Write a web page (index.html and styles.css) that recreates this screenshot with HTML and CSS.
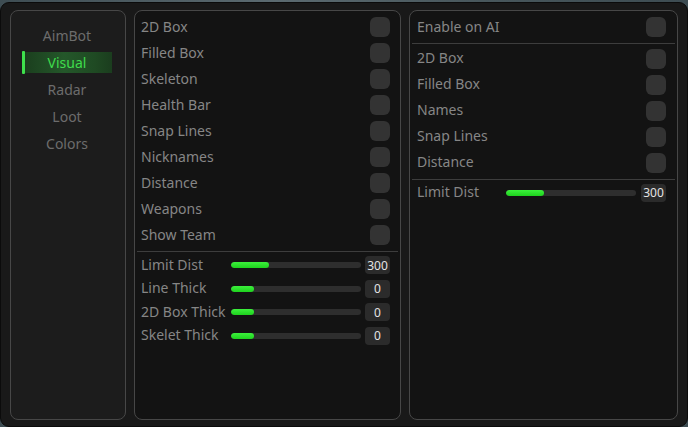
FILE: index.html
```html
<!DOCTYPE html>
<html>
<head>
<meta charset="utf-8">
<link rel="stylesheet" href="styles.css">
</head>
<body>
<div class="window">
  <nav class="panel sidebar">
    <div class="tab">AimBot</div>
    <div class="tab active">Visual</div>
    <div class="tab">Radar</div>
    <div class="tab">Loot</div>
    <div class="tab">Colors</div>
  </nav>

  <section class="panel main">
    <div class="row"><span class="lbl">2D Box</span><i class="check"></i></div>
    <div class="row"><span class="lbl">Filled Box</span><i class="check"></i></div>
    <div class="row"><span class="lbl">Skeleton</span><i class="check"></i></div>
    <div class="row"><span class="lbl">Health Bar</span><i class="check"></i></div>
    <div class="row"><span class="lbl">Snap Lines</span><i class="check"></i></div>
    <div class="row"><span class="lbl">Nicknames</span><i class="check"></i></div>
    <div class="row"><span class="lbl">Distance</span><i class="check"></i></div>
    <div class="row"><span class="lbl">Weapons</span><i class="check"></i></div>
    <div class="row"><span class="lbl">Show Team</span><i class="check"></i></div>
    <div class="sep"></div>
    <div class="srow"><span class="lbl slabel">Limit Dist</span><div class="track"><div class="fill" style="width:38px"></div></div><span class="val">300</span></div>
    <div class="srow"><span class="lbl slabel">Line Thick</span><div class="track"><div class="fill" style="width:23px"></div></div><span class="val">0</span></div>
    <div class="srow"><span class="lbl slabel">2D Box Thick</span><div class="track"><div class="fill" style="width:23px"></div></div><span class="val">0</span></div>
    <div class="srow"><span class="lbl slabel">Skelet Thick</span><div class="track"><div class="fill" style="width:23px"></div></div><span class="val">0</span></div>
  </section>

  <section class="panel side">
    <div class="row"><span class="lbl">Enable on AI</span><i class="check"></i></div>
    <div class="sep"></div>
    <div class="row"><span class="lbl">2D Box</span><i class="check"></i></div>
    <div class="row"><span class="lbl">Filled Box</span><i class="check"></i></div>
    <div class="row"><span class="lbl">Names</span><i class="check"></i></div>
    <div class="row"><span class="lbl">Snap Lines</span><i class="check"></i></div>
    <div class="row"><span class="lbl">Distance</span><i class="check"></i></div>
    <div class="sep"></div>
    <div class="srow"><span class="lbl slabel">Limit Dist</span><div class="track"><div class="fill" style="width:38px"></div></div><span class="val">300</span></div>
  </section>
</div>
</body>
</html>
```

FILE: styles.css
```css
* { box-sizing: border-box; }
html, body { margin: 0; padding: 0; }
body {
  width: 688px;
  height: 427px;
  overflow: hidden;
  background: linear-gradient(90deg, #3e4d53, #5b6a70 40%, #48575c 70%, #3d4c52);
  font-family: "Noto Sans", "Open Sans", sans-serif;
}
.window {
  margin-top: 2px;
  height: 425px;
  background: #191919;
  border: 1px solid #0b0b0b;
  border-radius: 9px;
  padding: 7px 9px 7px 9px;
  display: grid;
  grid-template-columns: 116px 267px 269px;
  column-gap: 8px;
}
.panel {
  border: 1px solid #474747;
  border-radius: 8px;
  height: 410px;
  display: flex;
  flex-direction: column;
}
.sidebar {
  background: #1c1c1c;
  padding: 11px 13px 0 11px;
}
.tab {
  height: 27px;
  display: flex;
  align-items: center;
  justify-content: center;
  font-size: 14px;
  color: #6c6c6c;
  position: relative;
}
.tab.active {
  color: #3fdc4c;
  isolation: isolate;
}
.tab.active::before {
  content: "";
  position: absolute;
  left: 3px; right: 0; top: 3px; bottom: 3px;
  background: linear-gradient(90deg, #1b3f1e, #24572a 45%, #1f4a23 80%, #1b3d1e);
  z-index: -1;
}
.tab.active::after {
  content: "";
  position: absolute;
  left: 0; top: 2px; bottom: 2px;
  width: 3px;
  background: #3ee04c;
  border-radius: 1px;
}

.main, .side {
  background: #131313;
  padding: 3px 2px 0 2px;
}
.row {
  height: 26px;
  display: flex;
  align-items: center;
  justify-content: space-between;
  font-size: 14px;
  color: #868686;
}
.lbl { transform: translateY(-1px); }
.main .row { padding: 0 8px 0 4px; }
.side .row { padding: 0 9px 0 5px; }
.check {
  display: block;
  width: 20px;
  height: 20px;
  border-radius: 6px;
  background: #333333;
}
.sep {
  height: 1px;
  background: #3d3d3d;
  margin: 3px 0 1.5px;
}
.srow {
  height: 23.5px;
  display: flex;
  align-items: center;
  font-size: 14px;
  color: #868686;
}
.main .srow { padding: 0 8px 0 4px; }
.side .srow { padding: 0 9px 0 5px; }
.slabel {
  width: 90px;
  white-space: nowrap;
}
.side .slabel { width: 89px; }
.track {
  width: 130px;
  height: 6px;
  border-radius: 3px;
  background: #2e2e2e;
  overflow: hidden;
}
.fill {
  height: 100%;
  border-radius: 3px;
  background: linear-gradient(180deg, #3cf03c, #1ed21e);
}
.val {
  margin-left: auto;
  width: 25px;
  height: 18px;
  border-radius: 4px;
  background: #2b2b2b;
  color: #e4e4e4;
  font-size: 12px;
  display: flex;
  align-items: center;
  justify-content: center;
}
```
